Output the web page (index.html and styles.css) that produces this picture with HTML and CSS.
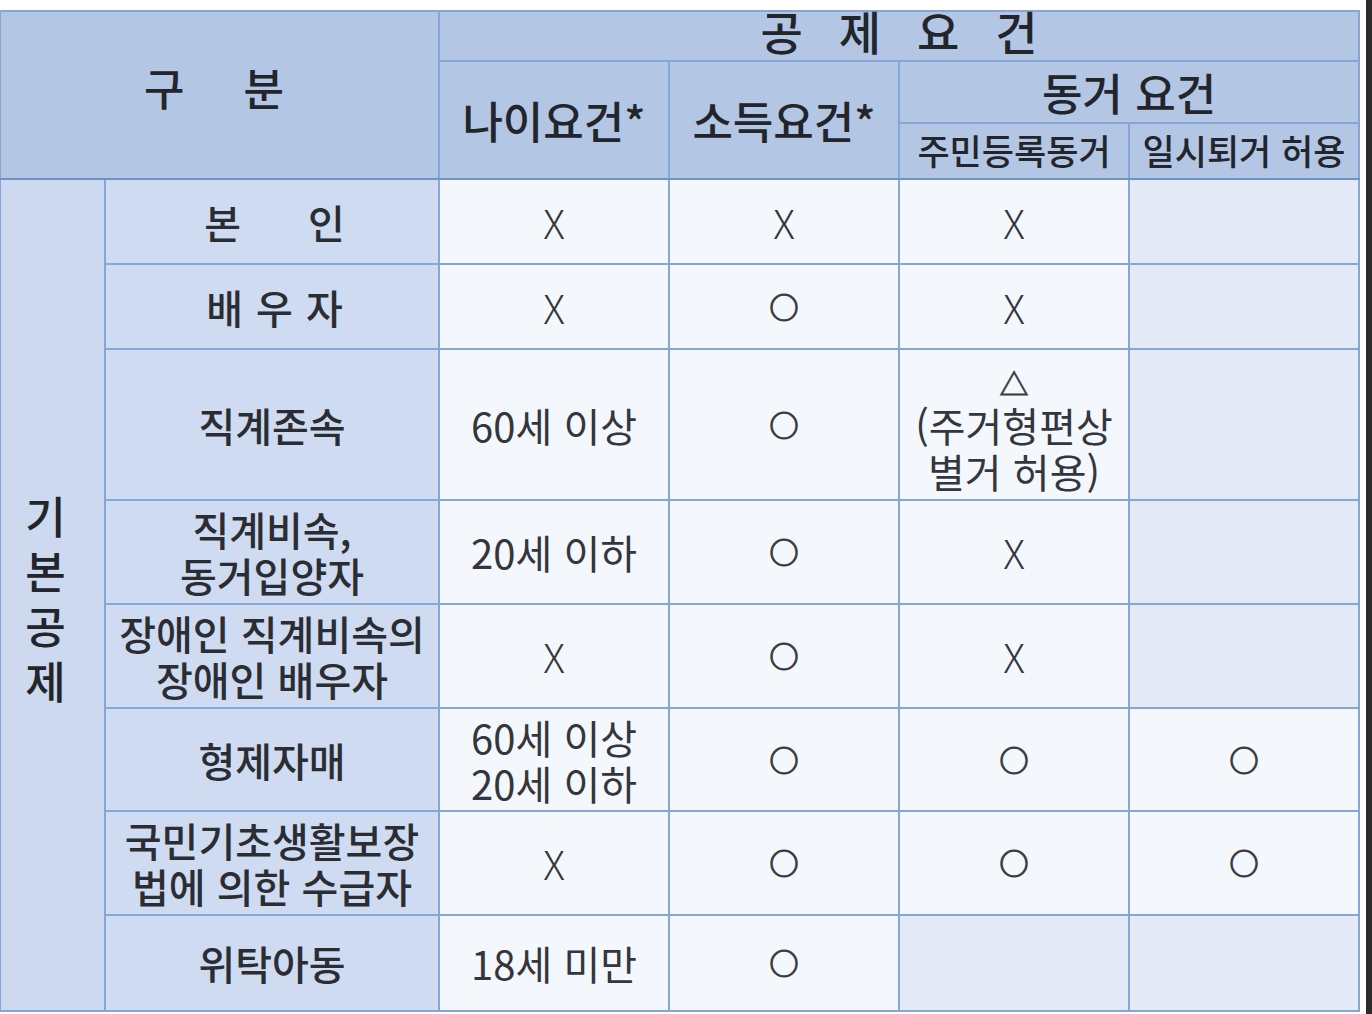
FILE: index.html
```html
<!DOCTYPE html>
<html lang="ko">
<head>
<meta charset="utf-8">
<link rel="stylesheet" href="styles.css">
</head>
<body>
<div class="page">
  <div class="sheet">
    <table class="deduct">
      <colgroup>
        <col class="c-group">
        <col class="c-label">
        <col class="c-data">
        <col class="c-data">
        <col class="c-data">
        <col class="c-data">
      </colgroup>
      <thead>
        <tr class="h1">
          <th class="hd gubun" colspan="2" rowspan="3"><div class="box box-gubun"><span class="spaced-wide">구분</span></div></th>
          <th class="hd top" colspan="4"><div class="box box-top"><span class="spaced">공제요건</span></div></th>
        </tr>
        <tr class="h2">
          <th class="hd mid" rowspan="2"><div class="box box-mid">나이요건*</div></th>
          <th class="hd mid" rowspan="2"><div class="box box-mid">소득요건*</div></th>
          <th class="hd mid2" colspan="2"><div class="box box-mid2">동거 요건</div></th>
        </tr>
        <tr class="h3">
          <th class="hd small"><div class="box box-small">주민등록동거</div></th>
          <th class="hd small"><div class="box box-small">일시퇴거 허용</div></th>
        </tr>
      </thead>
      <tbody>
        <tr class="r85">
          <td class="group" rowspan="8"><span class="vert">기<br>본<br>공<br>제</span></td>
          <td class="label"><span class="gap-wide">본인</span></td>
          <td class="val x">X</td>
          <td class="val x">X</td>
          <td class="val x">X</td>
          <td class="empty"></td>
        </tr>
        <tr class="r85">
          <td class="label"><span class="gap">배우자</span></td>
          <td class="val x">X</td>
          <td class="val o">○</td>
          <td class="val x">X</td>
          <td class="empty"></td>
        </tr>
        <tr class="r151">
          <td class="label">직계존속</td>
          <td class="val">60세 이상</td>
          <td class="val o">○</td>
          <td class="val tri"><span class="tri-mark">△</span><br>(주거형편상<br>별거 허용)</td>
          <td class="empty"></td>
        </tr>
        <tr class="r104">
          <td class="label">직계비속,<br>동거입양자</td>
          <td class="val">20세 이하</td>
          <td class="val o">○</td>
          <td class="val x">X</td>
          <td class="empty"></td>
        </tr>
        <tr class="r104">
          <td class="label">장애인 직계비속의<br>장애인 배우자</td>
          <td class="val x">X</td>
          <td class="val o">○</td>
          <td class="val x">X</td>
          <td class="empty"></td>
        </tr>
        <tr class="r103">
          <td class="label">형제자매</td>
          <td class="val">60세 이상<br>20세 이하</td>
          <td class="val o">○</td>
          <td class="val o">○</td>
          <td class="val o">○</td>
        </tr>
        <tr class="r104">
          <td class="label">국민기초생활보장<br>법에 의한 수급자</td>
          <td class="val x">X</td>
          <td class="val o">○</td>
          <td class="val o">○</td>
          <td class="val o">○</td>
        </tr>
        <tr class="r96">
          <td class="label">위탁아동</td>
          <td class="val">18세 미만</td>
          <td class="val o">○</td>
          <td class="empty"></td>
          <td class="empty"></td>
        </tr>
      </tbody>
    </table>
  </div>
  <div class="edge"></div>
</div>
</body>
</html>
```

FILE: styles.css
```css
html, body {
  margin: 0;
  padding: 0;
  background: #ffffff;
}

body {
  font-family: "Noto Sans CJK KR", "Noto Sans", sans-serif;
  color: #2a2d33;
}

.page {
  display: flex;
  width: 1372px;
  height: 1014px;
  overflow: hidden;
}

.sheet {
  width: 1358px;
  padding-top: 10px;
}

.edge {
  width: 6px;
  margin-left: 8px;
  background: #2b2b2b;
  height: 1014px;
}

.deduct {
  width: 1359px;
  table-layout: fixed;
  border-collapse: collapse;
  margin-left: -1px;
}

.c-group { width: 105px; }
.c-label { width: 334px; }
.c-data { width: 230px; }

.deduct th,
.deduct td {
  border: 2px solid #86a6d6;
  padding: 0;
  text-align: center;
  vertical-align: middle;
  line-height: 1.15;
}

.hd {
  background: #b3c6e4;
  color: #22252b;
  font-weight: 500;
  font-size: 16px;
  line-height: 1;
}

.box {
  display: flex;
  align-items: center;
  justify-content: center;
  white-space: nowrap;
}

.box-gubun {
  height: 150px;
  font-size: 44px;
  padding-bottom: 16px;
  box-sizing: border-box;
}

.box-top {
  height: 46px;
  font-size: 46px;
  line-height: 40px;
  padding-bottom: 12px;
  box-sizing: border-box;
}

.box-mid {
  height: 110px;
  font-size: 44px;
  line-height: 50px;
}

.box-mid2 {
  height: 58px;
  font-size: 44px;
  line-height: 44px;
}

.box-small {
  height: 50px;
  font-size: 35px;
  line-height: 36px;
  padding-bottom: 2px;
  box-sizing: border-box;
}

.h1 { height: 50px; }
.h2 { height: 62px; }
.h3 { height: 56px; }

.spaced {
  letter-spacing: 36px;
  padding-left: 36px;
}

.spaced-wide {
  letter-spacing: 59px;
  padding-left: 48px;
}

.deduct thead tr:last-child th,
.deduct thead th[rowspan="3"],
.deduct thead th[rowspan="2"] {
  border-bottom-color: #7292c4;
}

.r85 { height: 85px; }
.r151 { height: 151px; }
.r104 { height: 104px; }
.r103 { height: 103px; }
.r96 { height: 96px; }

.group {
  background: #ccd9ee;
  font-size: 44px;
  font-weight: 500;
  color: #22252b;
}

.vert {
  display: inline-block;
  line-height: 55px;
  padding-top: 6px;
  margin-right: 14px;
}

.label {
  background: #cfdbf0;
  font-size: 40px;
  font-weight: 500;
  color: #2a2d33;
  line-height: 46px;
}

.gap-wide {
  letter-spacing: 67px;
  padding-left: 72px;
}

.gap {
  letter-spacing: 13px;
  padding-left: 18px;
}

.val {
  background: #f4f7fc;
  font-size: 40px;
  font-weight: 400;
  color: #33363c;
  line-height: 45px;
}

.x {
  font-weight: 300;
}

.o {
  font-size: 29px;
  -webkit-text-stroke: 1.2px #3a3d42;
  color: #3a3d42;
}

.tri {
  line-height: 46px;
}

.tri-mark {
  font-size: 29px;
  -webkit-text-stroke: 0.8px #3a3d42;
}

.empty {
  background: #e3eaf5;
}
```
